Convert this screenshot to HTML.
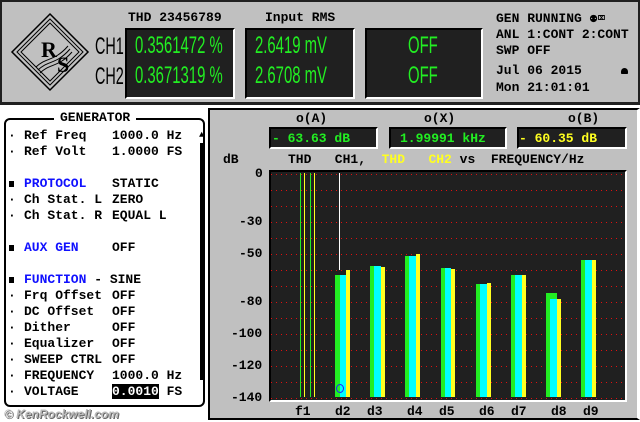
<!DOCTYPE html>
<html><head><meta charset="utf-8"><style>
*{margin:0;padding:0;box-sizing:border-box}
body{width:640px;height:422px;background:#fff;position:relative;overflow:hidden;font-family:"Liberation Mono",monospace;font-weight:bold}
.a{position:absolute;white-space:pre}
.t{font-size:13px;color:#000}
.box{position:absolute;background:#202020;border:2px solid #000;border-right-color:#fff;border-bottom-color:#fff}
.lcd{position:absolute;font-family:"Liberation Sans",sans-serif;color:#22ee22;font-size:24px;transform:scaleX(.62);transform-origin:left top;white-space:pre;font-weight:normal}
.chl{position:absolute;font-family:'Liberation Sans',sans-serif;font-size:24px;transform:scaleX(.6);transform-origin:left top;font-weight:normal}
.g{position:absolute;left:0;width:100%;height:1px;background:repeating-linear-gradient(90deg,#e01010 0 1px,transparent 1px 5px)}
.r{position:absolute;font-size:13px;white-space:pre}
.b{position:absolute;font-size:13px;left:8px}
.sq{position:absolute;left:9px;width:5px;height:6px;background:#000}
.bl{color:#1010ff}
</style></head><body>
<div class="a" style="left:0;top:0;width:640px;height:105px;background:#c0c0c0;border:2px solid #202020;border-bottom:3px solid #202020"></div>
<svg class="a" style="left:10px;top:12px" width="80" height="80" viewBox="0 0 80 80">
<polygon points="40,2 78,40 40,78 2,40" fill="#c0c0c0" stroke="#000" stroke-width="1.5"/>
<polygon points="40,7 73,40 40,73 7,40" fill="none" stroke="#000" stroke-width="1"/>
<polygon points="40,11 69,40 40,69 11,40" fill="none" stroke="#000" stroke-width="1"/>
<path d="M26,55 C36,45 44,50 58,34 M28,58 C38,48 46,53 60,37 M30,61 C40,51 48,56 62,40" fill="none" stroke="#000" stroke-width="1"/>
<text x="31" y="45" font-family="Liberation Serif,serif" font-size="22">R</text>
<text x="47" y="60" font-family="Liberation Serif,serif" font-size="22">S</text>
</svg>
<div class="chl" style="left:95px;top:33px">CH1</div>
<div class="chl" style="left:95px;top:63px">CH2</div>
<div class="a t" style="left:128px;top:10px">THD 23456789</div>
<div class="a t" style="left:265px;top:10px">Input RMS</div>
<div class="box" style="left:125px;top:28px;width:110px;height:71px"></div>
<div class="box" style="left:245px;top:28px;width:110px;height:71px"></div>
<div class="box" style="left:365px;top:28px;width:118px;height:71px"></div>
<div class="lcd" style="left:135px;top:32px">0.3561472 %</div>
<div class="lcd" style="left:135px;top:62px">0.3671319 %</div>
<div class="lcd" style="left:255px;top:32px">2.6419 mV</div>
<div class="lcd" style="left:255px;top:62px">2.6708 mV</div>
<div class="lcd" style="left:408px;top:32px">OFF</div>
<div class="lcd" style="left:408px;top:62px">OFF</div>
<div class="a t" style="left:496px;top:11px">GEN RUNNING ⚉⌧</div>
<div class="a t" style="left:496px;top:27px">ANL 1:CONT 2:CONT</div>
<div class="a t" style="left:496px;top:43px">SWP OFF</div>
<div class="a t" style="left:496px;top:63px">Jul 06 2015</div>
<div class="a" style="left:621px;top:68px;width:7px;height:6px;background:#000;border-radius:4px 4px 1px 1px"></div>
<div class="a t" style="left:496px;top:80px">Mon 21:01:01</div>
<div class="a" style="left:4px;top:118px;width:201px;height:289px;border:2px solid #000;border-radius:6px"></div>
<div class="a t" style="left:54px;top:110px;background:#fff;padding:0 6px">GENERATOR</div>
<div class="a" style="left:200px;top:143px;width:3px;height:237px;background:#000"></div>
<div class="a" style="left:199px;top:130px;font-size:9px">▲</div>
<div class="b" style="top:128px">·</div><div class="r" style="left:24px;top:128px">Ref Freq</div><div class="r" style="left:112px;top:128px">1000.0 Hz</div>
<div class="b" style="top:144px">·</div><div class="r" style="left:24px;top:144px">Ref Volt</div><div class="r" style="left:112px;top:144px">1.0000 FS</div>
<div class="sq" style="top:181px"></div><div class="r bl" style="left:24px;top:176px">PROTOCOL</div><div class="r" style="left:112px;top:176px">STATIC</div>
<div class="b" style="top:192px">·</div><div class="r" style="left:24px;top:192px">Ch Stat. L</div><div class="r" style="left:112px;top:192px">ZERO</div>
<div class="b" style="top:208px">·</div><div class="r" style="left:24px;top:208px">Ch Stat. R</div><div class="r" style="left:112px;top:208px">EQUAL L</div>
<div class="sq" style="top:245px"></div><div class="r bl" style="left:24px;top:240px">AUX GEN</div><div class="r" style="left:112px;top:240px">OFF</div>
<div class="sq" style="top:277px"></div><div class="r" style="left:24px;top:272px"><span class="bl">FUNCTION</span> - SINE</div>
<div class="b" style="top:288px">·</div><div class="r" style="left:24px;top:288px">Frq Offset</div><div class="r" style="left:112px;top:288px">OFF</div>
<div class="b" style="top:304px">·</div><div class="r" style="left:24px;top:304px">DC Offset</div><div class="r" style="left:112px;top:304px">OFF</div>
<div class="b" style="top:320px">·</div><div class="r" style="left:24px;top:320px">Dither</div><div class="r" style="left:112px;top:320px">OFF</div>
<div class="b" style="top:336px">·</div><div class="r" style="left:24px;top:336px">Equalizer</div><div class="r" style="left:112px;top:336px">OFF</div>
<div class="b" style="top:352px">·</div><div class="r" style="left:24px;top:352px">SWEEP CTRL</div><div class="r" style="left:112px;top:352px">OFF</div>
<div class="b" style="top:368px">·</div><div class="r" style="left:24px;top:368px">FREQUENCY</div><div class="r" style="left:112px;top:368px">1000.0 Hz</div>
<div class="b" style="top:384px">·</div><div class="r" style="left:24px;top:384px">VOLTAGE</div><div class="r" style="left:112px;top:384px"><span style="background:#000;color:#fff">0.0010</span> FS</div>
<div class="a" style="left:4px;top:407px;font-family:'Liberation Sans',sans-serif;font-size:12px;color:#bbb;font-style:italic;text-shadow:1px 1px 0 #666">© KenRockwell.com</div>
<div class="a" style="left:208px;top:108px;width:432px;height:312px;background:#c0c0c0;border:2px solid #000;border-right:3px solid #fff"></div>
<div class="a t" style="left:296px;top:111px">o(A)</div>
<div class="a t" style="left:424px;top:111px">o(X)</div>
<div class="a t" style="left:568px;top:111px">o(B)</div>
<div class="box" style="left:269px;top:127px;width:109px;height:22px"></div>
<div class="box" style="left:389px;top:127px;width:118px;height:22px"></div>
<div class="box" style="left:517px;top:127px;width:110px;height:22px"></div>
<div class="a t" style="left:272px;top:131px;color:#22ee22">- 63.63 dB</div>
<div class="a t" style="left:400px;top:131px;color:#22ee22">1.99991 kHz</div>
<div class="a t" style="left:519px;top:131px;color:#ffff20">- 60.35 dB</div>
<div class="a t" style="left:223px;top:152px">dB</div>
<div class="a t" style="left:288px;top:152px">THD   CH1,  <span style="color:#ffff20">THD</span>   <span style="color:#ffff20">CH2</span> vs  FREQUENCY/Hz</div>
<div class="a" style="left:269px;top:170px;width:358px;height:232px;background:#202020;border:2px solid #000;border-right-color:#fff;border-bottom-color:#fff;overflow:hidden">
 <div class="g" style="top:2px"></div><div class="g" style="top:18px"></div><div class="g" style="top:34px"></div><div class="g" style="top:50px"></div><div class="g" style="top:66px"></div><div class="g" style="top:82px"></div><div class="g" style="top:98px"></div><div class="g" style="top:114px"></div><div class="g" style="top:130px"></div><div class="g" style="top:146px"></div><div class="g" style="top:162px"></div><div class="g" style="top:178px"></div><div class="g" style="top:194px"></div><div class="g" style="top:210px"></div><div class="g" style="top:226px"></div>
</div>
<div class="a" style="left:300px;top:173px;width:1px;height:224px;background:#22ee22"></div>
<div class="a" style="left:304px;top:173px;width:1px;height:224px;background:#ffff20"></div>
<div class="a" style="left:310px;top:173px;width:1px;height:224px;background:#22ee22"></div>
<div class="a" style="left:314px;top:173px;width:1px;height:224px;background:#ffff20"></div>
<div class="a" style="left:339px;top:173px;width:1px;height:97px;background:#fff"></div>
<div class="a" style="left:335px;top:275px;width:5px;height:122px;background:#22ee22"></div><div class="a" style="left:340px;top:275px;width:6px;height:122px;background:#00ffff"></div><div class="a" style="left:346px;top:270px;width:4px;height:127px;background:#ffff20"></div>
<div class="a" style="left:370px;top:266px;width:4px;height:131px;background:#22ee22"></div><div class="a" style="left:374px;top:266px;width:7px;height:131px;background:#00ffff"></div><div class="a" style="left:381px;top:267px;width:4px;height:130px;background:#ffff20"></div>
<div class="a" style="left:405px;top:256px;width:4px;height:141px;background:#22ee22"></div><div class="a" style="left:409px;top:256px;width:7px;height:141px;background:#00ffff"></div><div class="a" style="left:416px;top:254px;width:4px;height:143px;background:#ffff20"></div>
<div class="a" style="left:441px;top:268px;width:4px;height:129px;background:#22ee22"></div><div class="a" style="left:445px;top:268px;width:6px;height:129px;background:#00ffff"></div><div class="a" style="left:451px;top:269px;width:4px;height:128px;background:#ffff20"></div>
<div class="a" style="left:476px;top:284px;width:4px;height:113px;background:#22ee22"></div><div class="a" style="left:480px;top:284px;width:7px;height:113px;background:#00ffff"></div><div class="a" style="left:487px;top:283px;width:4px;height:114px;background:#ffff20"></div>
<div class="a" style="left:511px;top:275px;width:4px;height:122px;background:#22ee22"></div><div class="a" style="left:515px;top:275px;width:7px;height:122px;background:#00ffff"></div><div class="a" style="left:522px;top:275px;width:4px;height:122px;background:#ffff20"></div>
<div class="a" style="left:546px;top:293px;width:11px;height:104px;background:#22ee22"></div><div class="a" style="left:550px;top:299px;width:7px;height:98px;background:#00ffff"></div><div class="a" style="left:557px;top:299px;width:4px;height:98px;background:#ffff20"></div>
<div class="a" style="left:581px;top:260px;width:4px;height:137px;background:#22ee22"></div><div class="a" style="left:585px;top:260px;width:7px;height:137px;background:#00ffff"></div><div class="a" style="left:592px;top:260px;width:4px;height:137px;background:#ffff20"></div>
<div class="a" style="left:336px;top:384px;width:8px;height:9px;border:1px solid #2020ff;border-radius:50%"></div>
<div class="a t" style="left:255px;top:166px">0</div>
<div class="a t" style="left:239px;top:214px">-30</div>
<div class="a t" style="left:239px;top:246px">-50</div>
<div class="a t" style="left:239px;top:294px">-80</div>
<div class="a t" style="left:231px;top:326px">-100</div>
<div class="a t" style="left:231px;top:358px">-120</div>
<div class="a t" style="left:231px;top:390px">-140</div>
<div class="a t" style="left:295px;top:404px">f1</div>
<div class="a t" style="left:335px;top:404px">d2</div>
<div class="a t" style="left:367px;top:404px">d3</div>
<div class="a t" style="left:407px;top:404px">d4</div>
<div class="a t" style="left:439px;top:404px">d5</div>
<div class="a t" style="left:479px;top:404px">d6</div>
<div class="a t" style="left:511px;top:404px">d7</div>
<div class="a t" style="left:551px;top:404px">d8</div>
<div class="a t" style="left:583px;top:404px">d9</div>
</body></html>
